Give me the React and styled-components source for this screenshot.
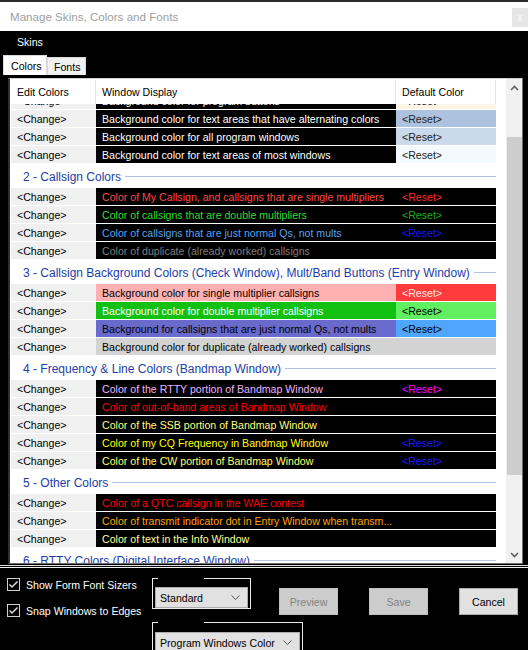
import React from "react";
import styled, { createGlobalStyle } from "styled-components";

const sections = [
	{
		title: null,
		rows: [
			{ text: "Background color for program buttons", fg: "#fff", bg: "#000", reset: "#222", resetBg: "#fdf5e6" },
			{ text: "Background color for text areas that have alternating colors", fg: "#fff", bg: "#000", reset: "#222", resetBg: "#adc2df" },
			{ text: "Background color for all program windows", fg: "#fff", bg: "#000", reset: "#222", resetBg: "#cbd9ec" },
			{ text: "Background color for text areas of most windows", fg: "#fff", bg: "#000", reset: "#222", resetBg: "#f0faff" },
		],
	},
	{
		title: "2 - Callsign Colors",
		rows: [
			{ text: "Color of My Callsign, and callsigns that are single multipliers", fg: "#ff4848", bg: "#000", reset: "#ff2a2a", resetBg: "#000" },
			{ text: "Color of callsigns that are double multipliers", fg: "#33dd33", bg: "#000", reset: "#1faa1f", resetBg: "#000" },
			{ text: "Color of callsigns that are just normal Qs, not mults", fg: "#55a2f0", bg: "#000", reset: "#1515ff", resetBg: "#000" },
			{ text: "Color of duplicate (already worked) callsigns", fg: "#7f7f7f", bg: "#000", resetBg: "#000" },
		],
	},
	{
		title: "3 - Callsign Background Colors (Check Window), Mult/Band Buttons (Entry Window)",
		rows: [
			{ text: "Background color for single multiplier callsigns", fg: "#000", bg: "#ffb0b0", reset: "#ffe8e8", resetBg: "#ff3b3b" },
			{ text: "Background color for double multiplier callsigns", fg: "#fff", bg: "#11c011", reset: "#000", resetBg: "#62f062" },
			{ text: "Background for callsigns that are just normal Qs, not mults", fg: "#000", bg: "#6a6acd", reset: "#000", resetBg: "#4fa6ff" },
			{ text: "Background color for duplicate (already worked) callsigns", fg: "#000", bg: "#d3d3d3", resetBg: "#d3d3d3" },
		],
	},
	{
		title: "4 - Frequency & Line Colors (Bandmap Window)",
		rows: [
			{ text: "Color of the RTTY portion of Bandmap Window", fg: "#eeb4ff", bg: "#000", reset: "#ff00ff", resetBg: "#000" },
			{ text: "Color of out-of-band areas of Bandmap Window", fg: "#ff0000", bg: "#000", resetBg: "#000" },
			{ text: "Color of the SSB portion of Bandmap Window", fg: "#ffff80", bg: "#000", resetBg: "#000" },
			{ text: "Color of my CQ Frequency in Bandmap Window", fg: "#ffff00", bg: "#000", reset: "#1a1aff", resetBg: "#000" },
			{ text: "Color of the CW portion of Bandmap Window", fg: "#ffff70", bg: "#000", reset: "#1a1aff", resetBg: "#000" },
		],
	},
	{
		title: "5 - Other Colors",
		rows: [
			{ text: "Color of a QTC callsign in the WAE contest", fg: "#ff0000", bg: "#000", resetBg: "#000" },
			{ text: "Color of transmit indicator dot in Entry Window when transm...", fg: "#ffa500", bg: "#000", resetBg: "#000" },
			{ text: "Color of text in the Info Window", fg: "#ffff99", bg: "#000", resetBg: "#000" },
		],
	},
	{
		title: "6 - RTTY Colors (Digital Interface Window)",
		rows: [
			{ text: "Color of text in the RTTY window", fg: "#fff", bg: "#000", resetBg: "#000" },
		],
	},
];

export default function App() {
	return (
		<>
			<GlobalStyle />
			<Window>
				<TitleBar>
					<span>Manage Skins, Colors and Fonts</span>
					<CloseBox>x</CloseBox>
				</TitleBar>
				<MenuBar>Skins</MenuBar>
				<TabStrip>
					<Tab $active>Colors</Tab>
					<Tab>Fonts</Tab>
				</TabStrip>
				<TabPage>
					<Panel>
						<GridArea>
							<Header>
								<HeadCell>Edit Colors</HeadCell>
								<HeadCell>Window Display</HeadCell>
								<HeadCell>Default Color</HeadCell>
							</Header>
							<Body>
								<BodyInner $scroll={12}>
									{sections.map((sec, i) => (
										<React.Fragment key={i}>
											{sec.title && <Section>{sec.title}</Section>}
											{sec.rows.map((row, j) => (
												<Row key={j}>
													<ChangeCell>&lt;Change&gt;</ChangeCell>
													<Cell $bg={row.bg} $fg={row.fg}>
														{row.text}
													</Cell>
													<Cell $bg={row.resetBg} $fg={row.reset}>
														{row.reset ? "<Reset>" : ""}
													</Cell>
												</Row>
											))}
										</React.Fragment>
									))}
								</BodyInner>
							</Body>
						</GridArea>
						<ScrollBar>
							<ScrollBtn>
								<Chevron />
							</ScrollBtn>
							<Track>
								<Thumb />
							</Track>
							<ScrollBtn>
								<Chevron down />
							</ScrollBtn>
						</ScrollBar>
					</Panel>
				</TabPage>
				<Footer>
					<Checks>
						<CheckRow>
							<CheckBox>
								<Tick />
							</CheckBox>
							<span>Show Form Font Sizers</span>
						</CheckRow>
						<CheckRow>
							<CheckBox>
								<Tick />
							</CheckBox>
							<span>Snap Windows to Edges</span>
						</CheckRow>
					</Checks>
					<Group $col="2" $row="1" $width={99} $top={10}>
						<Gap />
						<Combo $top={8}>
							Standard
							<SmallChevron />
						</Combo>
					</Group>
					<Buttons>
						<Button disabled>Preview</Button>
						<Button disabled>Save</Button>
						<Button>Cancel</Button>
					</Buttons>
					<Group $col="2 / span 2" $row="2" $width={151} $top={0}>
						<Gap />
						<Combo $top={9}>
							Program Windows Color
							<SmallChevron />
						</Combo>
					</Group>
				</Footer>
			</Window>
		</>
	);
}

function Chevron({ down }) {
	return (
		<svg width="9" height="6" viewBox="0 0 9 6">
			<polyline
				points={down ? "1,1 4.5,4.5 8,1" : "1,5 4.5,1.5 8,5"}
				fill="none"
				stroke="#606060"
				strokeWidth="1.6"
			/>
		</svg>
	);
}

function SmallChevron() {
	return (
		<ComboArrow width="9" height="5" viewBox="0 0 9 5">
			<polyline points="0.5,0.5 4.5,4.5 8.5,0.5" fill="none" stroke="#555" strokeWidth="1" />
		</ComboArrow>
	);
}

function Tick() {
	return (
		<svg width="11" height="11" viewBox="0 0 11 11">
			<polyline points="1.5,5.5 4,8 9.5,2.5" fill="none" stroke="#d8d8d8" strokeWidth="1.5" />
		</svg>
	);
}

const GlobalStyle = createGlobalStyle`
	html, body {
		margin: 0;
		padding: 0;
		background: #000;
	}
	body {
		font-family: "Liberation Sans", Arial, sans-serif;
		font-size: 10.6px;
		overflow: hidden;
	}
	* {
		box-sizing: border-box;
	}
`;

const Window = styled.div`
	width: 528px;
	height: 650px;
	display: flex;
	flex-direction: column;
	overflow: hidden;
	background: #000;
`;

const TitleBar = styled.div`
	height: 31px;
	flex: none;
	background: #fff;
	border-top: 2px solid #2b2b2b;
	display: flex;
	justify-content: space-between;
	padding-left: 10px;
	align-items: center;
	color: #9e9e9e;
	font-size: 11.6px;
`;

const CloseBox = styled.div`
	width: 16px;
	height: 19px;
	align-self: flex-start;
	margin-top: 6px;
	background: #e6e6e6;
	color: #fff;
	font-size: 10px;
	display: flex;
	align-items: center;
	justify-content: center;
`;

const MenuBar = styled.div`
	height: 22px;
	flex: none;
	padding-left: 17px;
	display: flex;
	align-items: center;
	color: #fff;
`;

const TabStrip = styled.div`
	height: 22px;
	flex: none;
	display: flex;
	align-items: flex-end;
	padding-left: 3px;
`;

const Tab = styled.div`
	width: ${({ $active }) => ($active ? "44px" : "39px")};
	height: ${({ $active }) => ($active ? "20px" : "18px")};
	padding-left: ${({ $active }) => ($active ? "7px" : "6px")};
	display: flex;
	align-items: center;
	background: ${({ $active }) => ($active ? "#fff" : "#f0f0f0")};
	border: 1px solid #d9d9d9;
	border-bottom: 0;
	color: #000;
`;

const TabPage = styled.div`
	flex: none;
	height: 491px;
	padding: 3px 5px 1px 8px;
	border-bottom: 1px solid #e0e0e0;
`;

const Panel = styled.div`
	width: 515px;
	height: 486px;
	display: flex;
	background: #fff;
	border-top: 1px solid #cfcfcf;
	border-left: 2px solid #2e2e2e;
	border-right: 1px solid #6d6d6d;
	border-bottom: 1px solid #6d6d6d;
`;

const GridArea = styled.div`
	width: 496px;
	display: flex;
	flex-direction: column;
`;

const Header = styled.div`
	height: 25px;
	flex: none;
	padding-top: 1px;
	display: grid;
	grid-template-columns: 86px 300px 100px;
`;

const HeadCell = styled.div`
	padding-left: 6px;
	display: flex;
	align-items: center;
	border-right: 1px solid #e3e3e3;
	color: #000;

	&:first-child {
		padding-left: 7px;
	}
`;

const Body = styled.div`
	flex: 1;
	overflow: hidden;
	padding-left: 1px;
`;

const BodyInner = styled.div`
	margin-top: -${({ $scroll }) => $scroll}px;
`;

const Section = styled.div`
	width: 485px;
	height: 24px;
	display: flex;
	align-items: center;
	padding: 1px 0 0 12px;
	color: #1c3caa;
	font-size: 12px;
	white-space: nowrap;

	&::after {
		content: "";
		flex: 1;
		height: 1px;
		margin-left: 4px;
		background: #b3c1e6;
	}
`;

const Row = styled.div`
	display: grid;
	grid-template-columns: 85px 300px 100px;
	height: 17px;
	margin-bottom: 1px;
`;

const Cell = styled.div`
	padding: 1px 0 0 6px;
	line-height: 17px;
	white-space: nowrap;
	overflow: hidden;
	background: ${({ $bg }) => $bg};
	color: ${({ $fg }) => $fg || "#000"};
`;

const ChangeCell = styled(Cell)`
	background: #f0f0f0;
	color: #000;
`;

const ScrollBar = styled.div`
	width: 16px;
	display: flex;
	flex-direction: column;
	background: #f0f0f0;
`;

const ScrollBtn = styled.div`
	height: 17px;
	flex: none;
	display: flex;
	align-items: center;
	justify-content: center;
`;

const Track = styled.div`
	flex: 1;
	padding-top: 41px;
`;

const Thumb = styled.div`
	width: 15px;
	height: 338px;
	margin-left: 1px;
	background: #cdcdcd;
`;

const Footer = styled.div`
	flex: 1;
	margin-top: 1px;
	border-top: 1px solid #f2f2f2;
	display: grid;
	grid-template-columns: 152px 127px 1fr;
	grid-template-rows: 54px 1fr;
	color: #fff;
`;

const Checks = styled.div`
	grid-column: 1;
	grid-row: 1 / span 2;
	padding: 10px 0 0 7px;
	display: flex;
	flex-direction: column;
	gap: 13px;
`;

const CheckRow = styled.div`
	height: 13px;
	display: flex;
	align-items: center;
	gap: 6px;
	white-space: nowrap;
`;

const CheckBox = styled.div`
	width: 13px;
	height: 13px;
	flex: none;
	border: 1px solid #cfcfcf;
	background: #000;
	display: flex;
	align-items: center;
	justify-content: center;
`;

const Group = styled.fieldset`
	grid-column: ${({ $col }) => $col};
	grid-row: ${({ $row }) => $row};
	width: ${({ $width }) => $width}px;
	margin: ${({ $top }) => $top}px 0 0 0;
	padding: 0 2px;
	border: 1px solid #ececec;
	align-self: start;
	min-width: 0;
`;

const Gap = styled.legend`
	width: 46px;
	height: 0;
	margin-left: 3px;
	padding: 0;
	font-size: 0;
	line-height: 0;
`;

const Combo = styled.div`
	margin-top: ${({ $top }) => $top}px;
	height: 21px;
	background: #e1e1e1;
	border: 1px solid #adadad;
	color: #000;
	padding-left: 4px;
	display: flex;
	align-items: center;
	justify-content: space-between;
	white-space: nowrap;
`;

const ComboArrow = styled.svg`
	margin-right: 7px;
	flex: none;
`;

const Buttons = styled.div`
	grid-column: 3;
	grid-row: 1;
	margin-top: 20px;
	display: flex;
	gap: 31px;
	align-items: flex-start;
`;

const Button = styled.button`
	width: 59px;
	height: 27px;
	padding: 0;
	font-family: inherit;
	font-size: 10.6px;
	background: ${({ disabled }) => (disabled ? "#cccccc" : "#e1e1e1")};
	border: 1px solid ${({ disabled }) => (disabled ? "#bfbfbf" : "#adadad")};
	color: ${({ disabled }) => (disabled ? "#838383" : "#000")};
`;
